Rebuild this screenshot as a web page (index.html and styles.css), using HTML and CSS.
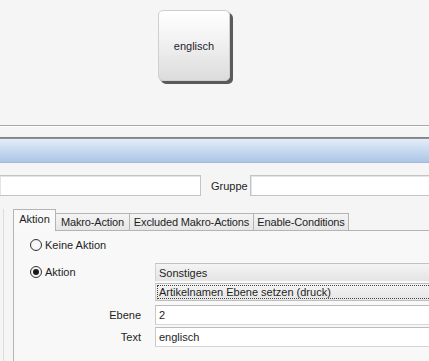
FILE: index.html
```html
<!DOCTYPE html>
<html>
<head>
<meta charset="utf-8">
<link rel="stylesheet" href="styles.css">
</head>
<body>
<div class="top">
  <div class="key">englisch</div>
</div>
<div class="rule1"></div>
<div class="rule2"></div>
<div class="band"></div>
<div class="fields">
  <div class="inp inp-a"></div>
  <span class="lbl">Gruppe</span>
  <div class="inp inp-b"></div>
</div>
<div class="outer">
  <div class="tabstrip">
    <div class="tab active">Aktion</div>
    <div class="tab">Makro-Action</div>
    <div class="tab">Excluded Makro-Actions</div>
    <div class="tab">Enable-Conditions</div>
    <div class="tab-fill"></div>
  </div>
  <div class="panel">
    <div class="row r1">
      <label class="radio"><span class="dot"></span>Keine Aktion</label>
    </div>
    <div class="row r2">
      <label class="radio"><span class="dot on"></span>Aktion</label>
      <div class="combo">Sonstiges</div>
    </div>
    <div class="row r3">
      <span></span>
      <div class="combo2"><span class="focus">Artikelnamen Ebene setzen (druck)</span></div>
    </div>
    <div class="row r4">
      <span class="flbl">Ebene</span>
      <div class="txt">2</div>
    </div>
    <div class="row r5">
      <span class="flbl">Text</span>
      <div class="txt">englisch</div>
    </div>
  </div>
</div>
</body>
</html>
```
FILE: styles.css
```css
html, body {
  margin: 0;
  padding: 0;
  background: #f5f5f5;
  width: 429px;
  height: 361px;
  overflow: hidden;
  font-family: "Liberation Sans", Arial, sans-serif;
  font-size: 11px;
  color: #1e1e24;
}
.top {
  height: 125px;
  padding-left: 158px;
  padding-top: 10px;
  box-sizing: border-box;
}
.key {
  width: 72px;
  height: 71px;
  box-sizing: border-box;
  border: 1px solid #cfcfcf;
  border-radius: 5px;
  background: linear-gradient(#ffffff, #f3f3f3 40%, #dcdcdc);
  box-shadow: 3px 3px 0 #5a5a5a, 1px 1px 0 #8a8a8a;
  display: flex;
  align-items: center;
  justify-content: center;
  color: #1e1e2a;
}
.rule1 {
  height: 1px;
  background: #a9a9a9;
  border-bottom: 1px solid #fdfdfd;
}
.rule2 {
  margin-top: 10px;
  height: 2px;
  background: linear-gradient(#7a7a7a, #9a9a9a);
}
.band {
  height: 23px;
  background: linear-gradient(#e3edf9, #c4d7ee 55%, #adc6e4);
  border-bottom: 1px solid #9fbadc;
}
.fields {
  margin-top: 12px;
  height: 21px;
  display: flex;
  align-items: center;
}
.inp {
  height: 21px;
  box-sizing: border-box;
  background: #fff;
  border: 1px solid #c4c4c4;
  box-shadow: inset 1px 1px 0 #e4e4e4;
}
.inp-a { width: 201px; border-left: none; }
.lbl { width: 49px; padding-left: 10px; box-sizing: border-box; }
.inp-b { flex: 1; border-right: none; }
.outer {
  margin-top: 13px;
  margin-left: 3px;
  border-left: 1px solid #dcdcdc;
  padding-left: 9px;
  height: 152px;
}
.tabstrip {
  display: flex;
  align-items: flex-end;
  height: 22px;
}
.tab {
  height: 18px;
  box-sizing: border-box;
  padding: 0 4px;
  border: 1px solid #b4b4b4;
  border-left: none;
  background: linear-gradient(#f4f4f4, #e6e6e6);
  display: flex;
  align-items: center;
  justify-content: center;
  white-space: nowrap;
  letter-spacing: -0.15px;
}
.tab.active {
  height: 22px;
  border-left: 1px solid #b4b4b4;
  border-bottom: none;
  background: #f9f9f9;
  padding: 0 5px 3px 5px;
  width: 43px;
  letter-spacing: 0;
}
.tab:nth-child(2) { width: 74px; }
.tab:nth-child(3) { width: 124px; }
.tab:nth-child(4) { width: 95px; }
.tab-fill {
  flex: 1;
  border-bottom: 1px solid #b4b4b4;
}
.panel {
  border-left: 1px solid #b4b4b4;
  background: #f8f8f8;
  height: 130px;
  padding-left: 16px;
  padding-top: 5px;
  box-sizing: border-box;
}
.row {
  display: grid;
  grid-template-columns: 111px 1fr;
  column-gap: 14px;
  align-items: center;
}
.r1 { height: 18px; }
.r2 { height: 18px; margin-top: 9px; }
.r3 { height: 18px; margin-top: 2px; }
.r4 { height: 20px; margin-top: 4px; }
.r5 { height: 20px; margin-top: 2px; }
.radio {
  display: flex;
  align-items: center;
  gap: 3px;
}
.dot {
  width: 12px;
  height: 12px;
  box-sizing: border-box;
  border: 1px solid #333;
  border-radius: 50%;
  background: radial-gradient(#ffffff, #ececec);
  display: flex;
  align-items: center;
  justify-content: center;
}
.dot.on::after {
  content: "";
  width: 6px;
  height: 6px;
  border-radius: 50%;
  background: #1a1a1a;
}
.combo {
  height: 18px;
  box-sizing: border-box;
  border-top: 1px solid #c2c2c2;
  border-left: 1px solid #d2d2d2;
  background: linear-gradient(#f4f4f4, #e4e4e4);
  padding-left: 3px;
  display: flex;
  align-items: center;
}
.combo2 {
  height: 18px;
  box-sizing: border-box;
  border-top: 1px solid #bdbdbd;
  border-bottom: 1px solid #bdbdbd;
  border-left: 1px solid #cfcfcf;
  background: linear-gradient(#f4f4f4, #e6e6e6);
  padding: 1px 0 1px 1px;
  display: flex;
}
.focus {
  flex: 1;
  border: 1px dotted #444;
  border-right: none;
  padding-left: 1px;
  display: flex;
  align-items: center;
}
.flbl { text-align: right; }
.txt {
  height: 20px;
  box-sizing: border-box;
  background: #fff;
  border-top: 1px solid #bcbcbc;
  border-bottom: 1px solid #d6d6d6;
  border-left: 1px solid #c8c8c8;
  padding-left: 3px;
  display: flex;
  align-items: center;
}
```
